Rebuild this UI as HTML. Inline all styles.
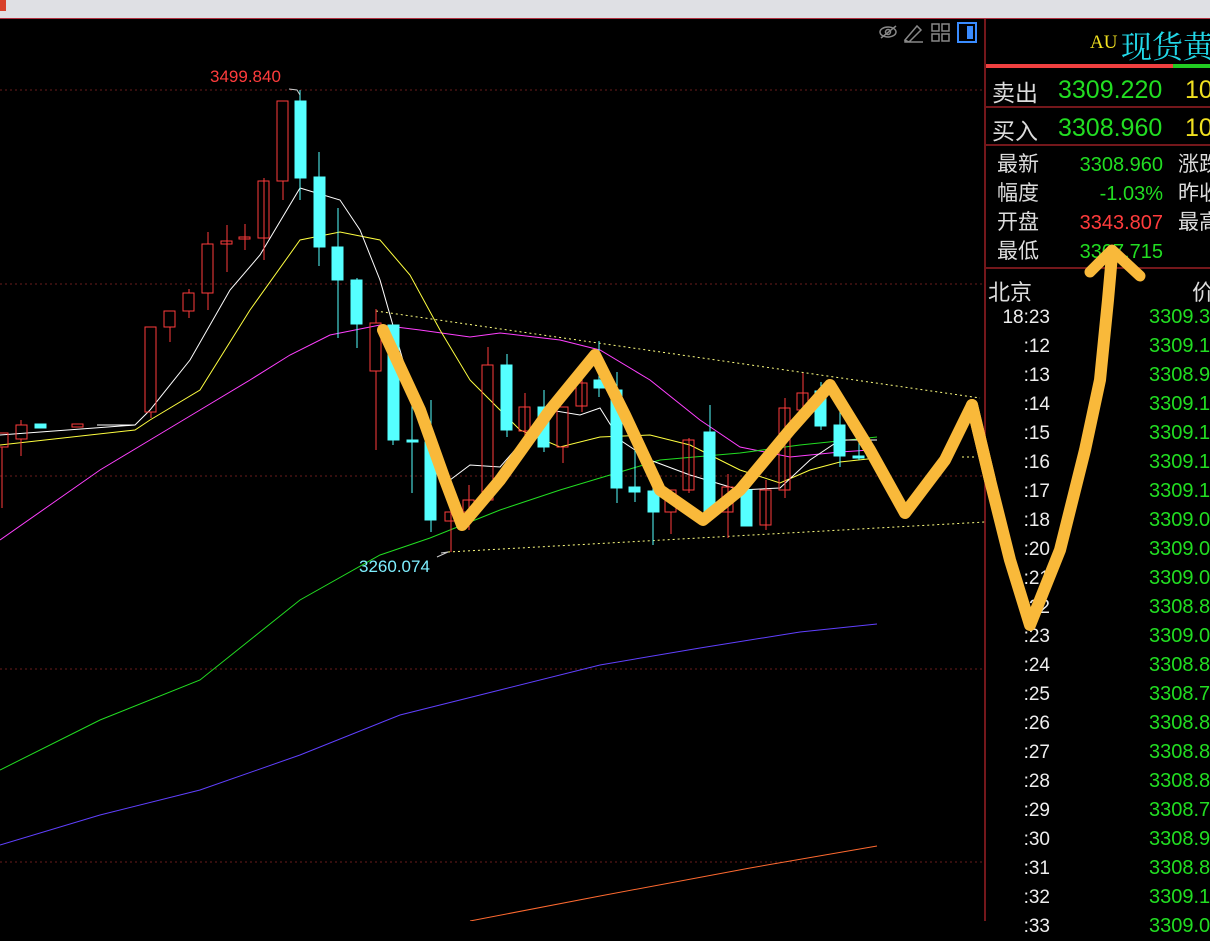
<!DOCTYPE html><html><head><meta charset="utf-8"><style>
body{margin:0;width:1210px;height:921px;overflow:hidden;background:#000;font-family:"Liberation Sans","Noto Sans CJK SC",sans-serif;position:relative}
.t{position:absolute;white-space:nowrap}
.b{position:absolute;white-space:nowrap}
</style></head><body>
<div style="position:absolute;left:0;top:0;width:1210px;height:18px;background:#dfe0e4"></div>
<div style="position:absolute;left:0;top:0;width:6px;height:11px;background:#d8412a"></div>
<div style="position:absolute;left:0;top:18px;width:1210px;height:1px;background:#b03040"></div>
<svg style="position:absolute;left:0;top:0" width="1210" height="921">
<g stroke="#6a1c1c" stroke-dasharray="2,3" stroke-width="1">
<line x1="0" y1="90" x2="985" y2="90"/><line x1="0" y1="284" x2="985" y2="284"/><line x1="0" y1="476" x2="985" y2="476"/><line x1="0" y1="669" x2="985" y2="669"/><line x1="0" y1="862" x2="985" y2="862"/>
</g>
<line x1="985" y1="19" x2="985" y2="921" stroke="#9a1f24" stroke-width="1.5"/>
<g fill="none" stroke-width="1">
<polyline stroke="#ff40ff" points="0,540 50,505 100,470 150,440 200,410 250,380 290,355 330,335 380,325 420,330 470,337 500,333 560,340 600,350 650,380 700,420 740,447 790,457 840,452 870,450"/>
<polyline stroke="#22dd22" points="0,770 100,720 200,680 300,600 380,555 430,538 500,510 560,490 610,475 660,460 740,453 800,445 877,437"/>
<polyline stroke="#6040ff" points="0,845 100,815 200,790 300,755 400,715 500,690 600,665 700,648 800,632 877,624"/>
<polyline stroke="#ff6a30" points="470,921 600,896 750,868 877,846"/>
<polyline stroke="#ffff40" points="0,445 135,430 150,420 200,390 250,310 300,240 340,232 380,240 410,275 440,330 470,380 490,400 520,430 560,447 600,437 650,435 690,445 740,470 780,483 810,470 840,462 877,458"/>
<polyline stroke="#fff" points="0,435 135,425 150,410 190,360 230,290 260,255 300,188 340,200 360,230 380,280 400,350 420,420 450,480 470,465 500,467 550,410 580,415 600,408 620,440 650,460 690,475 740,490 780,488 810,460 840,440 877,440"/>
<g stroke="#ffff80" stroke-dasharray="2,3"><line x1="376" y1="311" x2="980" y2="398"/><line x1="448" y1="552" x2="985" y2="522"/><line x1="962" y1="457" x2="975" y2="457"/></g>
</g>
<g stroke-width="1">
<g fill="none" stroke="#ff3c3c">
<rect x="-3" y="433" width="11" height="14"/><line x1="2" y1="447" x2="2" y2="508"/>
<rect x="16" y="425" width="11" height="14"/><line x1="21" y1="420" x2="21" y2="425"/><line x1="21" y1="439" x2="21" y2="456"/>
<rect x="72" y="424" width="11" height="3"/>
<rect x="145" y="327" width="11" height="85"/><line x1="151" y1="412" x2="151" y2="418"/>
<rect x="164" y="311" width="11" height="16"/><line x1="170" y1="327" x2="170" y2="342"/>
<rect x="183" y="293" width="11" height="18"/><line x1="189" y1="289" x2="189" y2="293"/><line x1="189" y1="311" x2="189" y2="318"/>
<rect x="202" y="244" width="11" height="49"/><line x1="208" y1="232" x2="208" y2="244"/><line x1="208" y1="293" x2="208" y2="310"/>
<rect x="221" y="241" width="11" height="3"/><line x1="227" y1="225" x2="227" y2="272"/>
<rect x="239" y="237" width="11" height="2"/><line x1="245" y1="224" x2="245" y2="250"/>
<rect x="258" y="181" width="11" height="57"/><line x1="264" y1="178" x2="264" y2="260"/>
<rect x="277" y="101" width="11" height="80"/><line x1="283" y1="181" x2="283" y2="200"/>
<rect x="370" y="323" width="11" height="48"/><line x1="376" y1="309" x2="376" y2="323"/><line x1="376" y1="371" x2="376" y2="450"/>
<rect x="445" y="512" width="11" height="9"/><line x1="451" y1="498" x2="451" y2="552"/>
<rect x="463" y="500" width="11" height="12"/><line x1="469" y1="485" x2="469" y2="530"/>
<rect x="482" y="365" width="11" height="135"/><line x1="488" y1="347" x2="488" y2="365"/>
<rect x="519" y="407" width="11" height="24"/><line x1="525" y1="393" x2="525" y2="440"/>
<rect x="557" y="407" width="11" height="40"/><line x1="563" y1="447" x2="563" y2="463"/>
<rect x="576" y="383" width="11" height="23"/><line x1="582" y1="370" x2="582" y2="412"/>
<rect x="665" y="490" width="11" height="22"/><line x1="671" y1="512" x2="671" y2="534"/>
<rect x="683" y="440" width="11" height="50"/><line x1="689" y1="438" x2="689" y2="493"/>
<rect x="722" y="487" width="11" height="25"/><line x1="728" y1="474" x2="728" y2="538"/>
<rect x="760" y="490" width="11" height="35"/><line x1="766" y1="480" x2="766" y2="530"/>
<rect x="779" y="408" width="11" height="82"/><line x1="785" y1="398" x2="785" y2="498"/>
<rect x="797" y="393" width="11" height="17"/><line x1="803" y1="373" x2="803" y2="412"/>
</g>
<g fill="#55ffff" stroke="#55ffff">
<rect x="35" y="424" width="11" height="4"/>
<rect x="295" y="101" width="11" height="77"/><line x1="300" y1="90" x2="300" y2="200"/>
<rect x="314" y="177" width="11" height="70"/><line x1="319" y1="152" x2="319" y2="266"/>
<rect x="332" y="247" width="11" height="33"/><line x1="338" y1="208" x2="338" y2="338"/>
<rect x="351" y="280" width="11" height="44"/><line x1="357" y1="278" x2="357" y2="348"/>
<rect x="388" y="325" width="11" height="115"/><line x1="393" y1="440" x2="393" y2="445"/>
<rect x="407" y="440" width="11" height="2"/><line x1="412" y1="400" x2="412" y2="493"/>
<rect x="425" y="442" width="11" height="78"/><line x1="431" y1="400" x2="431" y2="532"/>
<rect x="501" y="365" width="11" height="65"/><line x1="507" y1="354" x2="507" y2="437"/>
<rect x="538" y="407" width="11" height="40"/><line x1="544" y1="390" x2="544" y2="452"/>
<rect x="594" y="380" width="11" height="8"/><line x1="599" y1="341" x2="599" y2="397"/>
<rect x="611" y="390" width="11" height="98"/><line x1="617" y1="372" x2="617" y2="503"/>
<rect x="629" y="487" width="11" height="5"/><line x1="635" y1="448" x2="635" y2="502"/>
<rect x="648" y="491" width="11" height="21"/><line x1="653" y1="465" x2="653" y2="545"/>
<rect x="704" y="432" width="11" height="83"/><line x1="710" y1="405" x2="710" y2="515"/>
<rect x="741" y="490" width="11" height="36"/>
<rect x="815" y="391" width="11" height="35"/><line x1="821" y1="382" x2="821" y2="430"/>
<rect x="834" y="425" width="11" height="31"/><line x1="840" y1="412" x2="840" y2="467"/>
<rect x="853" y="456" width="11" height="2"/><line x1="859" y1="430" x2="859" y2="460"/>
</g>
<g stroke="#fff" stroke-width="1"><line x1="97" y1="425" x2="135" y2="425"/></g>
</g>
<polyline fill="none" stroke="#f9b93a" stroke-width="12" stroke-linecap="round" stroke-linejoin="round" points="383,330 420,410 445,480 462,525 500,480 550,410 595,355 625,415 660,490 703,520 740,490 790,430 830,385 870,450 905,513 945,460 972,405 990,480"/>
<g fill="none" stroke="#888" stroke-width="1.5">
<ellipse cx="888" cy="32" rx="8" ry="5"/><circle cx="888" cy="32" r="2.5"/><line x1="881" y1="38" x2="896" y2="26"/>
<path d="M905 40 L917 26 L921 30 L909 42 Z M905 40 L905 42 L923 42"/>
<rect x="932" y="24" width="7" height="7"/><rect x="942" y="24" width="7" height="7"/><rect x="932" y="34" width="7" height="7"/><rect x="942" y="34" width="7" height="7"/>
</g>
<rect x="958" y="23" width="18" height="19" fill="none" stroke="#3a8cff" stroke-width="2"/><rect x="967" y="26" width="6" height="13" fill="#3a8cff"/>
<rect x="986" y="64" width="187" height="4" fill="#f04040"/><rect x="1173" y="64" width="37" height="4" fill="#22cc22"/>
<g stroke="#9a1f24" stroke-width="1.5"><line x1="986" y1="107" x2="1210" y2="107"/><line x1="986" y1="145" x2="1210" y2="145"/><line x1="986" y1="268" x2="1210" y2="268"/></g>
<polyline fill="none" stroke="#ccc" stroke-width="1" points="289,89 297,90 300,95"/>
<polyline fill="none" stroke="#ccc" stroke-width="1" points="437,557 448,552 441,553"/>
</svg>
<div class="t" style="left:210px;top:67px;color:#ff3c3c;font-size:17px">3499.840</div>
<div class="t" style="left:359px;top:557px;color:#7fefff;font-size:17px">3260.074</div>
<div class="t" style="left:1090px;top:32px;color:#f0e020;font-size:19px;font-family:'Liberation Serif',serif">AU</div>
<div class="t" style="left:1121px;top:22px;color:#22d8e8;font-size:31px;font-family:'Liberation Serif','Noto Serif CJK SC',serif">现货黄</div>
<div class="t" style="left:992px;top:74px;color:#ddd;font-size:23px">卖出</div>
<div class="t" style="left:1058px;top:76px;color:#22dd22;font-size:25px">3309.220</div>
<div class="t" style="left:1185px;top:76px;color:#f0e020;font-size:25px">10</div>
<div class="t" style="left:992px;top:112px;color:#ddd;font-size:23px">买入</div>
<div class="t" style="left:1058px;top:114px;color:#22dd22;font-size:25px">3308.960</div>
<div class="t" style="left:1185px;top:114px;color:#f0e020;font-size:25px">10</div>
<div class="b" style="left:997px;top:150px;font-size:21px;line-height:29px;color:#ddd">最新<br>幅度<br>开盘<br>最低</div>
<div class="b" style="left:1040px;width:123px;text-align:right;top:151px;font-size:20px;line-height:29px;color:#22dd22">3308.960<br>-1.03%<br><span style="color:#ff3c3c">3343.807</span><br>3307.715</div>
<div class="b" style="left:1178px;top:150px;font-size:21px;line-height:29px;color:#ddd">涨跌<br>昨收<br>最高</div>
<div class="t" style="left:988px;top:275px;color:#ddd;font-size:22px">北京</div>
<div class="t" style="left:1192px;top:275px;color:#ddd;font-size:22px">价</div>
<div class="b" style="left:980px;width:70px;text-align:right;top:303px;font-size:19px;line-height:29px;color:#eee">18:23<br>:12<br>:13<br>:14<br>:15<br>:16<br>:17<br>:18<br>:20<br>:21<br>:22<br>:23<br>:24<br>:25<br>:26<br>:27<br>:28<br>:29<br>:30<br>:31<br>:32<br>:33</div>
<div class="b" style="left:1149px;top:303px;font-size:20px;line-height:29px;color:#22dd22">3309.3<br>3309.1<br>3308.9<br>3309.1<br>3309.1<br>3309.1<br>3309.1<br>3309.0<br>3309.0<br>3309.0<br>3308.8<br>3309.0<br>3308.8<br>3308.7<br>3308.8<br>3308.8<br>3308.8<br>3308.7<br>3308.9<br>3308.8<br>3309.1<br>3309.0</div>
<svg style="position:absolute;left:0;top:0;pointer-events:none" width="1210" height="921"><polyline fill="none" stroke="#f9b93a" stroke-width="12" stroke-linecap="round" stroke-linejoin="round" points="972,405 990,480 1010,560 1030,625 1060,550 1085,450 1100,380 1108,300 1112,255"/><polyline fill="none" stroke="#f9b93a" stroke-width="11" stroke-linecap="round" stroke-linejoin="round" points="1090,272 1112,250 1140,276"/></svg>
</body></html>
